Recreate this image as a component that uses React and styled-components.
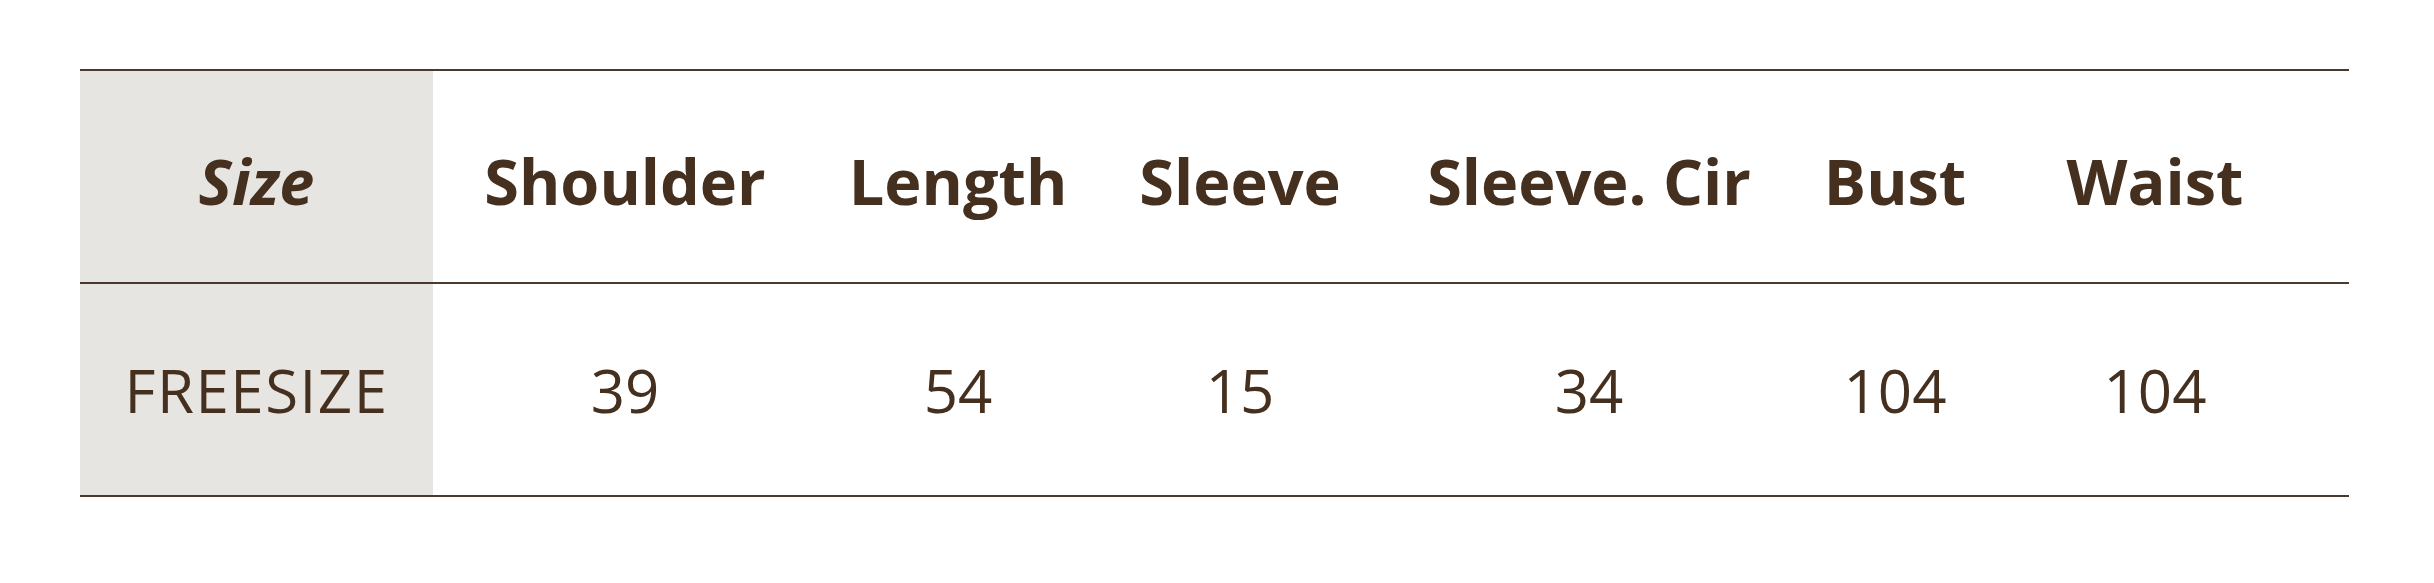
import React from "react";
import styled, { createGlobalStyle } from "styled-components";

const GlobalStyle = createGlobalStyle`
  html, body {
    margin: 0;
    padding: 0;
    background: #ffffff;
  }
`;

const Page = styled.div`
  padding: 69px 0 0 80px;
  font-family: "Open Sans", "Noto Sans", sans-serif;
  color: #45301f;
`;

const Table = styled.div`
  width: 2269px;
  display: grid;
  grid-template-columns: 353px 384px 282px 282px 416px 196px 324px 32px;
  border-top: 2px solid #4a3a2e;
`;

const Row = styled.div`
  display: contents;
`;

const Cell = styled.div`
  height: 213px;
  display: flex;
  align-items: center;
  justify-content: center;
  border-bottom: 2px solid #4a3a2e;
  background: ${(p) => (p.$shaded ? "#e7e5e1" : "transparent")};
  font-size: ${(p) => (p.$head ? "63px" : "60px")};
  font-weight: ${(p) => (p.$head ? 700 : 400)};
  font-style: ${(p) => (p.$italic ? "italic" : "normal")};
  letter-spacing: ${(p) => (p.$wide ? "1.5px" : "0")};
  padding-top: ${(p) => (p.$head ? "8px" : "0")};
  box-sizing: border-box;
  white-space: nowrap;
  line-height: 1;
`;

const headers = ["Shoulder", "Length", "Sleeve", "Sleeve. Cir", "Bust", "Waist"];
const values = ["39", "54", "15", "34", "104", "104"];

export default function App() {
  return (
    <>
      <GlobalStyle />
      <Page>
        <Table>
          <Row>
            <Cell $shaded $head $italic>Size</Cell>
            {headers.map((h) => (
              <Cell key={h} $head>{h}</Cell>
            ))}
            <Cell />
          </Row>
          <Row>
            <Cell $shaded $wide>FREESIZE</Cell>
            {values.map((v, i) => (
              <Cell key={i}>{v}</Cell>
            ))}
            <Cell />
          </Row>
        </Table>
      </Page>
    </>
  );
}
